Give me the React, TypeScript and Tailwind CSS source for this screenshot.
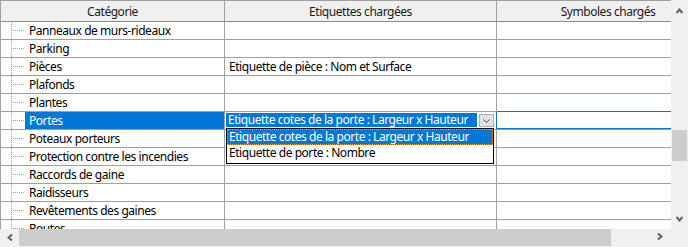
import React from 'react';

type Row = { cat: string; tag?: string; selected?: boolean };

const rows: Row[] = [
    { cat: 'Panneaux de murs-rideaux' },
    { cat: 'Parking' },
    { cat: 'Pièces', tag: 'Etiquette de pièce : Nom et Surface' },
    { cat: 'Plafonds' },
    { cat: 'Plantes' },
    { cat: 'Portes', selected: true },
    { cat: 'Poteaux porteurs' },
    { cat: 'Protection contre les incendies' },
    { cat: 'Raccords de gaine' },
    { cat: 'Raidisseurs' },
    { cat: 'Revêtements des gaines' },
    { cat: 'Routes' },
];

const TreeLines = () => (
    <svg width="24" height="17" className="shrink-0 block">
        <line x1="10.5" y1="0" x2="10.5" y2="17" stroke="#a0a0a0" strokeDasharray="1 1" />
        <line x1="12" y1="8.5" x2="24" y2="8.5" stroke="#a0a0a0" strokeDasharray="1 1" />
    </svg>
);

const Chevron = ({ dir }: { dir: 'up' | 'down' | 'left' | 'right' }) => {
    const pts = {
        up: '0.5,5 3.5,1.5 6.5,5',
        down: '0.5,1 3.5,4.5 6.5,1',
        left: '5,0.5 1.5,3.5 5,6.5',
        right: '1,0.5 4.5,3.5 1,6.5',
    }[dir];
    const vertical = dir === 'up' || dir === 'down';
    return (
        <svg width={vertical ? 7 : 6} height={vertical ? 6 : 7} className="block">
            <polyline points={pts} fill="none" stroke="#606060" strokeWidth="2" />
        </svg>
    );
};

const GridRow = ({ row }: { row: Row }) => (
    <div className="flex h-[18px] border-b border-[#a0a0a0]">
        {/* Catégorie */}
        <div className="flex w-[224px] shrink-0 border-r border-[#a0a0a0]">
            <TreeLines />
            <div
                className={`flex-1 pl-[4px] leading-[17px] whitespace-nowrap ${
                    row.selected ? 'bg-[#0078d7] text-white' : ''
                }`}
            >
                {row.cat}
            </div>
        </div>

        {/* Etiquettes chargées */}
        {row.selected ? (
            <div className="flex w-[272px] shrink-0 items-start pt-[1px] border-r border-[#0078d7]">
                <div className="ml-[1px] w-[251px] h-[14px] pl-[2px] bg-[#0078d7] text-white leading-[14px] whitespace-nowrap">
                    Etiquette cotes de la porte : Largeur x Hauteur
                </div>
                <div className="ml-[2px] mt-[1px] w-[15px] h-[13px] flex items-center justify-center border border-[#adadad] bg-[#e1e1e1]">
                    <svg width="7" height="4" className="block">
                        <polyline points="0.5,0.5 3.5,3.5 6.5,0.5" fill="none" stroke="#404040" strokeWidth="1" />
                    </svg>
                </div>
            </div>
        ) : (
            <div className="w-[272px] shrink-0 border-r border-[#a0a0a0] pl-[4px] leading-[17px] whitespace-nowrap">
                {row.tag}
            </div>
        )}

        {/* Symboles chargés */}
        <div
            className={`w-[222px] shrink-0 ${
                row.selected ? 'border-t border-b border-[#0078d7] -mt-[1px] h-[18px]' : ''
            }`}
        />
    </div>
);

export default function App() {
    return (
        <div className="w-[688px] h-[247px] grid grid-cols-[671px_17px] grid-rows-[229px_17px_1px] bg-white text-black text-[12px] tracking-[-0.45px] font-['Noto_Sans',sans-serif] overflow-hidden">
            {/* Grid area */}
            <div className="relative overflow-hidden border-l border-[#a0a0a0]">
                {/* Header */}
                <div className="flex h-[22px] border-t border-b border-t-[#a0a0a0] border-b-[#8c8c8c] bg-[#f0f0f0] text-[#1a1a1a]">
                    <div className="w-[224px] shrink-0 border-r border-[#a0a0a0] text-center leading-[21px]">Catégorie</div>
                    <div className="w-[272px] shrink-0 border-r border-[#a0a0a0] text-center leading-[21px]">Etiquettes chargées</div>
                    <div className="w-[222px] shrink-0 text-center leading-[21px]">Symboles chargés</div>
                </div>

                {rows.map(r => (
                    <GridRow key={r.cat} row={r} />
                ))}

                {/* Open dropdown list */}
                <div className="absolute left-[225px] top-[128px] w-[268px] h-[36px] border border-black bg-white">
                    <div className="h-[16px] bg-[#0078d7] text-white border border-dotted border-[#ff9c3a] pl-[1px] leading-[14px] whitespace-nowrap">
                        Etiquette cotes de la porte : Largeur x Hauteur
                    </div>
                    <div className="h-[16px] pl-[2px] leading-[16px] whitespace-nowrap">Etiquette de porte : Nombre</div>
                </div>
            </div>

            {/* Vertical scrollbar */}
            <div className="flex flex-col bg-[#f0f0f0]">
                <div className="h-[17px] flex justify-center pt-[8px]">
                    <Chevron dir="up" />
                </div>
                <div className="flex-1">
                    <div className="mt-[113px] mx-[1px] h-[31px] bg-[#cdcdcd]" />
                </div>
                <div className="h-[17px] flex justify-center pt-[4px]">
                    <Chevron dir="down" />
                </div>
            </div>

            {/* Horizontal scrollbar */}
            <div className="flex bg-[#f0f0f0]">
                <div className="w-[17px] flex items-center justify-center pl-[2px]">
                    <Chevron dir="left" />
                </div>
                <div className="ml-[2px] w-[592px] bg-[#cdcdcd]" />
                <div className="flex-1" />
                <div className="w-[17px] flex items-center justify-center pr-[6px] pb-[2px]">
                    <Chevron dir="right" />
                </div>
            </div>
            <div className="bg-[#f0f0f0]" />
            <div className="col-span-2 bg-[#f0f0f0]" />
        </div>
    );
}
